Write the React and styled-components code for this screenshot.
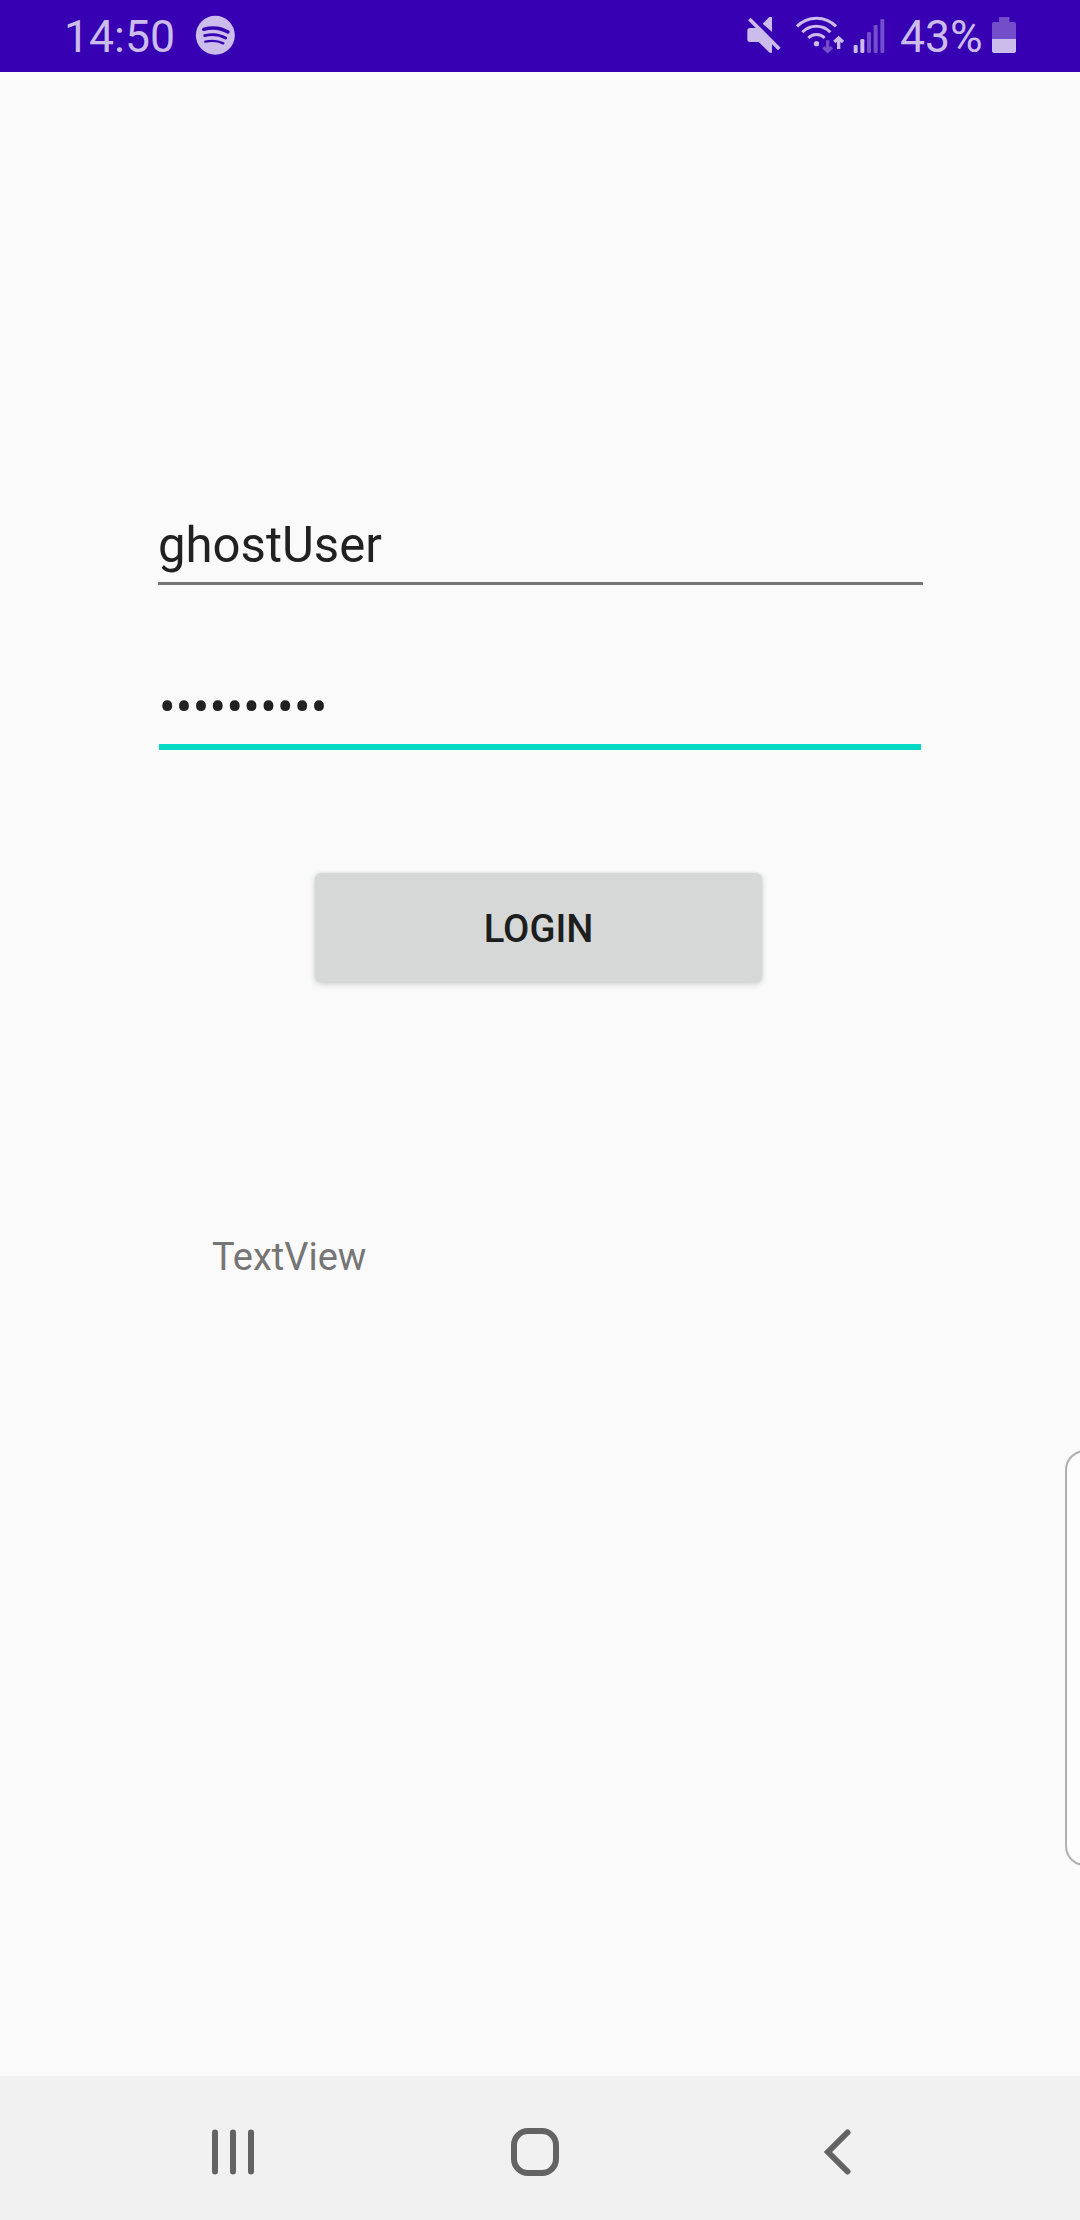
import React from "react";
import styled, { createGlobalStyle } from "styled-components";

const GlobalStyle = createGlobalStyle`
  * { box-sizing: border-box; }
  body { margin: 0; background: #fafafa; }
`;

const light = "#cbbcec";
const dim = "#734dca";

const Screen = styled.div`
  position: relative;
  display: flex;
  flex-direction: column;
  width: 1080px;
  height: 2220px;
  overflow: hidden;
  background: #fafafa;
  font-family: Roboto, sans-serif;
`;

const StatusBar = styled.header`
  display: flex;
  justify-content: space-between;
  height: 72px;
  padding: 0 64px;
  background: #3700b3;
`;

const StatusGroup = styled.div`
  display: flex;
  align-items: flex-start;
  padding-top: 15px;
`;

const StatusText = styled.span`
  width: ${(p) => p.$width}px;
  margin-left: ${(p) => p.$gap || 0}px;
  margin-top: -4px;
  font-size: 44.6px;
  line-height: 52px;
  white-space: nowrap;
  color: ${light};
`;

const StatusIcon = styled.svg`
  flex: none;
  display: block;
  height: 40px;
  width: ${(p) => p.$width}px;
  margin-left: ${(p) => p.$gap || 0}px;
`;

const Content = styled.main`
  flex: 1;
  display: flex;
  flex-direction: column;
  align-items: flex-start;
  padding-top: 430px;
`;

const Field = styled.div`
  width: ${(p) => (p.$focused ? 762 : 765)}px;
  height: ${(p) => (p.$focused ? 87 : 83)}px;
  margin-left: ${(p) => (p.$focused ? 159 : 158)}px;
  margin-top: ${(p) => (p.$focused ? 78 : 0)}px;
  padding-top: ${(p) => (p.$focused ? 16 : 15)}px;
  border-bottom: ${(p) => (p.$focused ? "6px solid #03dac5" : "3px solid #757575")};
  font-size: 49.1px;
  line-height: 57px;
  letter-spacing: ${(p) => (p.$focused ? "0.3px" : "normal")};
  white-space: nowrap;
  color: #212121;
`;

const LoginButton = styled.button`
  width: 447px;
  height: 109px;
  margin: 123px 0 0 315px;
  padding: 3px 0 0;
  border: 0;
  border-radius: 6px;
  background: #d6d8d7;
  box-shadow: 0 2px 6px rgba(0, 0, 0, 0.18), 0 0 3px rgba(0, 0, 0, 0.07);
  font: 500 38.2px/44px Roboto, sans-serif;
  color: #1d1e1e;
`;

const Message = styled.p`
  margin: 253px 0 0 212px;
  font-size: 38px;
  line-height: 44px;
  color: #757575;
`;

const EdgeHandle = styled.div`
  position: absolute;
  top: 1450px;
  left: 1065px;
  width: 40px;
  height: 416px;
  border: 2px solid #b0b0b0;
  border-radius: 20px;
  background: #fdfdfd;
`;

const NavBar = styled.nav`
  display: grid;
  grid-template-columns: 48px 48px 48px;
  column-gap: 254px;
  align-items: center;
  height: 144px;
  padding: 8px 0 0 209px;
  background: #f1f1f1;
`;

const NavIcon = styled.svg`
  display: block;
  width: 48px;
  height: 48px;
  fill: none;
  stroke: #636363;
  stroke-width: 6;
  stroke-linecap: round;
`;

export default function App() {
  return (
    <Screen>
      <GlobalStyle />
      <StatusBar>
        <StatusGroup>
          <StatusText $width={113}>14:50</StatusText>
          <StatusIcon $width={40} $gap={18} viewBox="435 45 120 120">
            <circle cx="496" cy="106" r="58.5" fill={light} />
            <g fill="none" stroke="#3700b3" strokeLinecap="round">
              <path d="M461 88Q501 77 534 96" strokeWidth="10" />
              <path d="M464 107Q498 98 527 114" strokeWidth="8.5" />
              <path d="M466 125Q496 118 520 130" strokeWidth="7" />
            </g>
          </StatusIcon>
        </StatusGroup>
        <StatusGroup>
          <StatusIcon $width={36} viewBox="48 45 108 120">
            <g fill={light}>
              <path d="M98 71L118 51H126V96Z" />
              <path d="M60 84H83L126 128V158H119L86 126H60Q52 126 52 118V92Q52 84 60 84Z" />
            </g>
            <path d="M58 57L148 147" stroke={light} strokeWidth="11" />
          </StatusIcon>
          <StatusIcon $width={50} $gap={13} viewBox="195 45 150 120">
            <g fill="none" stroke={light} strokeWidth="9">
              <path d="M201 79A82 82 0 0 1 318 79" />
              <path d="M217 97A58 58 0 0 1 301 97" />
              <path d="M235 114A34 34 0 0 1 284 114" />
            </g>
            <circle cx="259.5" cy="131" r="8" fill={light} />
            <path d="M293 121V153M280 142L293 154L306 142" fill="none" stroke={dim} strokeWidth="10" />
            <path d="M326 147V114M313 126L326 114L339 126" fill="none" stroke={light} strokeWidth="10" />
          </StatusIcon>
          <StatusIcon $width={32} $gap={8} viewBox="369 45 96 120">
            <rect x="371" y="135" width="12" height="24" rx="4" fill={light} />
            <rect x="391" y="117" width="12" height="42" rx="4" fill={light} />
            <rect x="411" y="96" width="12" height="63" rx="4" fill={dim} />
            <rect x="431" y="75" width="12" height="84" rx="4" fill={dim} />
            <rect x="451" y="57" width="12" height="102" rx="4" fill={dim} />
          </StatusIcon>
          <StatusText $width={92} $gap={15}>43%</StatusText>
          <StatusIcon $width={24} viewBox="0 0 24 40">
            <path d="M7 2H17.5V7H22Q24 7 24 9V24H0V9Q0 7 2 7H7Z" fill={dim} />
            <path d="M0 24H24V36Q24 38 22 38H2Q0 38 0 36Z" fill={light} />
          </StatusIcon>
        </StatusGroup>
      </StatusBar>
      <Content>
        <Field>ghostUser</Field>
        <Field $focused>••••••••••</Field>
        <LoginButton>LOGIN</LoginButton>
        <Message>TextView</Message>
      </Content>
      <EdgeHandle />
      <NavBar>
        <NavIcon viewBox="0 0 48 48">
          <path d="M6 4.5V43.5M24 4.5V43.5M42 4.5V43.5" />
        </NavIcon>
        <NavIcon viewBox="0 0 48 48">
          <rect x="3" y="3" width="42" height="42" rx="14" />
        </NavIcon>
        <NavIcon viewBox="0 0 48 48">
          <path d="M34.5 4.5L15 24L34.5 43.5" />
        </NavIcon>
      </NavBar>
    </Screen>
  );
}
